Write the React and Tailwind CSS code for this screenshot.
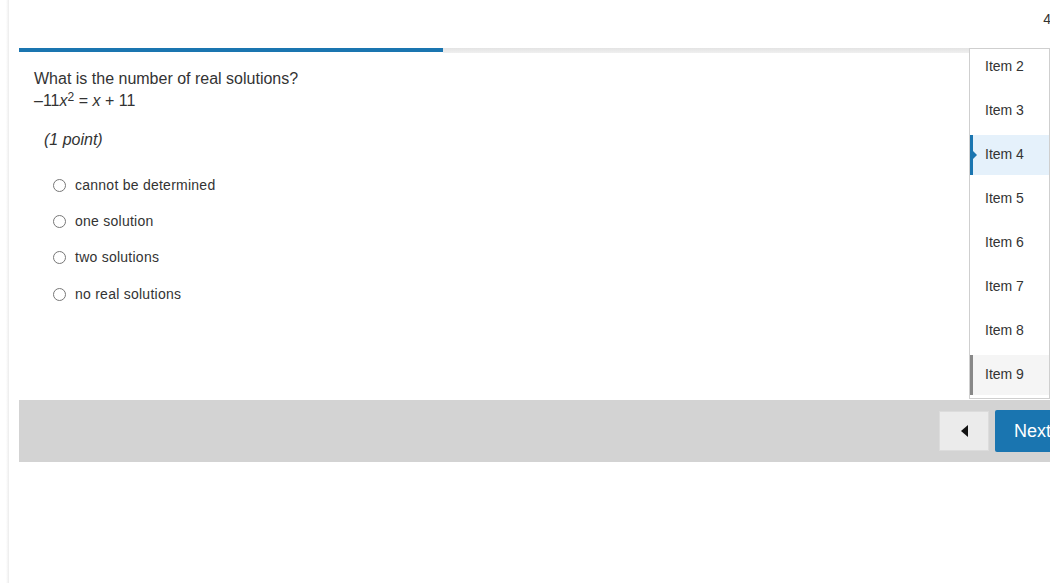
import React from "react";

const items = ["Item 2", "Item 3", "Item 4", "Item 5", "Item 6", "Item 7", "Item 8", "Item 9"];
const options = ["cannot be determined", "one solution", "two solutions", "no real solutions"];

export default function App() {
  return (
    <div
      className="relative w-[1050px] h-[583px] overflow-hidden bg-white text-[#333]"
      style={{ fontFamily: '"Liberation Sans", Arial, sans-serif' }}
    >
      <div className="absolute left-[6px] top-0 bottom-0 w-[3px] bg-gradient-to-r from-white to-[#ececec]" />
      <div className="ml-[19px] flex flex-col">
        <div className="h-[48px] flex justify-end items-start pt-[9px] text-[14px]">
          <span className="mr-[-1px]">4</span>
        </div>
        <div className="flex h-[5px]">
          <div className="w-[424px] h-[4px] bg-[#1a75b0]" />
          <div className="flex-1 h-[5px] bg-gradient-to-b from-[#e3e3e3] to-[#f0f0f0]" />
        </div>
        <div className="h-[347px] pl-[15px] pt-[15px]">
          <div className="text-[16px] leading-[22px]">What is the number of real solutions?</div>
          <div className="text-[16px] leading-[22px]">
            –11<i>x</i>
            <sup className="text-[12px] top-[-0.45em]">2</sup> = <i>x</i> + 11
          </div>
          <div className="mt-[17px] pl-[10px] text-[16px] leading-[22px] italic">(1 point)</div>
          <div className="mt-[16px] pl-[19px] flex flex-col">
            {options.map((o, i) => (
              <div key={o} className={"flex items-center " + (i === 2 ? "h-[37px]" : "h-[36px]")}>
                <span className="w-[13px] h-[13px] rounded-full border border-[#777] bg-white" />
                <span className="ml-[9px] text-[14px] tracking-[0.25px] text-[#333]">{o}</span>
              </div>
            ))}
          </div>
        </div>
        <div className="h-[62px] bg-[#d3d3d3] flex items-center justify-end gap-[6px]">
          <div className="w-[50px] h-[40px] bg-[#ebebeb] border border-[#dcdcdc] flex items-center justify-center">
            <svg width="9" height="14" viewBox="0 0 9 14">
              <path d="M8 1 L1 7 L8 13 Z" fill="#111" />
            </svg>
          </div>
          <div className="w-[55px] h-[42px] bg-[#1a75b0] rounded-l-[2px] flex items-center pl-[19px] text-white text-[18px]">
            Next
          </div>
        </div>
      </div>

      <div className="absolute left-[969px] top-[48px] w-[81px] h-[351px] border border-[#cfcfcf] bg-white overflow-hidden">
        <div className="mt-[-4px] flex flex-col">
          {items.map((it) => {
            const active = it === "Item 4";
            const visited = it === "Item 9";
            const cls = active
              ? "bg-[#e5f1fb] border-l-[3px] border-[#1a75b0] pl-[12px]"
              : visited
              ? "bg-[#f5f5f5] border-l-[3px] border-[#888] pl-[12px]"
              : "pl-[15px]";
            return (
              <div key={it} className="h-[44px] py-[2px]">
                <div className={"relative h-[40px] flex items-center pb-[2px] text-[14px] text-[#333] " + cls}>
                  {active && (
                    <span className="absolute left-0 top-[16px] w-0 h-0 border-y-[4px] border-y-transparent border-l-[4px] border-l-[#1a75b0]" />
                  )}
                  {it}
                </div>
              </div>
            );
          })}
        </div>
      </div>
    </div>
  );
}
